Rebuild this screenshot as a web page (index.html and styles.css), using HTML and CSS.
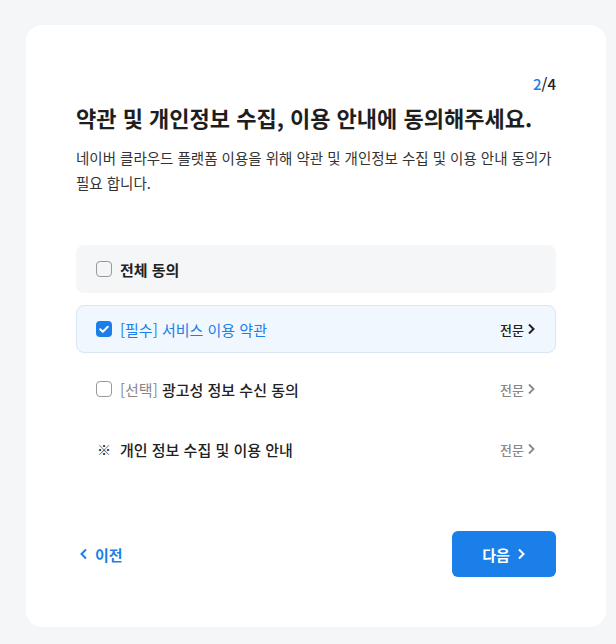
FILE: index.html
```html
<!DOCTYPE html>
<html lang="ko">
<head>
    <meta charset="UTF-8">
    <meta name="viewport" content="width=device-width, initial-scale=1.0">
    <title>약관 동의</title>
    <link rel="stylesheet" href="styles.css">
</head>
<body>
    <div class="card">
        <div class="step"><span class="step-now">2</span>/4</div>
        <h1 class="title">약관 및 개인정보 수집, 이용 안내에 동의해주세요.</h1>
        <p class="desc">네이버 클라우드 플랫폼 이용을 위해 약관 및 개인정보 수집 및 이용 안내 동의가 필요 합니다.</p>

        <ul class="terms">
            <li class="term term-all">
                <span class="check"></span>
                <span class="term-label">전체 동의</span>
            </li>
            <li class="term term-on">
                <span class="check checked">
                    <svg viewBox="0 0 16 16" width="16" height="16"><path d="M4.2 8.2l2.6 2.5 5-5" fill="none" stroke="#fff" stroke-width="2" stroke-linecap="round" stroke-linejoin="round"/></svg>
                </span>
                <span class="term-label">[필수] 서비스 이용 약관</span>
                <a class="more">전문 <svg viewBox="0 0 10 12" width="10" height="12"><path d="M3 1.5l4.5 4.5L3 10.5" fill="none" stroke="currentColor" stroke-width="2"/></svg></a>
            </li>
            <li class="term">
                <span class="check"></span>
                <span class="term-label"><span class="tag">[선택]</span> 광고성 정보 수신 동의</span>
                <a class="more">전문 <svg viewBox="0 0 10 12" width="10" height="12"><path d="M3 1.5l4.5 4.5L3 10.5" fill="none" stroke="currentColor" stroke-width="1.8"/></svg></a>
            </li>
            <li class="term">
                <span class="mark">※</span>
                <span class="term-label">개인 정보 수집 및 이용 안내</span>
                <a class="more">전문 <svg viewBox="0 0 10 12" width="10" height="12"><path d="M3 1.5l4.5 4.5L3 10.5" fill="none" stroke="currentColor" stroke-width="1.8"/></svg></a>
            </li>
        </ul>

        <div class="actions">
            <a class="prev"><svg viewBox="0 0 10 12" width="10" height="12"><path d="M7 1.5L2.5 6 7 10.5" fill="none" stroke="currentColor" stroke-width="2"/></svg> 이전</a>
            <button class="next">다음 <svg viewBox="0 0 10 12" width="10" height="12"><path d="M3 1.5l4.5 4.5L3 10.5" fill="none" stroke="currentColor" stroke-width="2"/></svg></button>
        </div>
    </div>
</body>
</html>
```

FILE: styles.css
```css
body {
    margin: 0;
    padding: 25px 10px 18px 26px;
    background-color: #f5f6f8;
    font-family: "Noto Sans CJK KR", "Noto Sans", sans-serif;
    color: #222;
}
.card {
    width: 480px;
    background-color: #fff;
    border-radius: 16px;
    padding: 49px 50px 50px;
}
.step {
    text-align: right;
    font-size: 15px;
    line-height: 20px;
    font-weight: 500;
    color: #222;
}
.step-now {
    color: #1a7fe8;
}
.title {
    margin: 7px 0 0;
    font-size: 22px;
    line-height: 32px;
    font-weight: 700;
    color: #1e1e1e;
}
.desc {
    margin: 12px 0 0;
    font-size: 14.5px;
    line-height: 25px;
    color: #333;
}
.terms {
    list-style: none;
    margin: 50px 0 0;
    padding: 0;
    display: flex;
    flex-direction: column;
    gap: 12px;
}
.term {
    display: flex;
    align-items: center;
    height: 48px;
    padding: 0 19px 0 19px;
    border: 1px solid transparent;
    border-radius: 8px;
    box-sizing: border-box;
    font-size: 15px;
    font-weight: 500;
    color: #222;
}
.term-all {
    background-color: #f5f6f8;
    border-color: #f5f6f8;
}
.term-all .term-label {
    font-weight: 700;
}
.term-on {
    background-color: #f0f7ff;
    border-color: #d8e6f5;
}
.term-on .term-label {
    color: #1a7fe8;
    font-weight: 400;
}
.check {
    width: 14px;
    height: 14px;
    border: 1px solid #999;
    border-radius: 4px;
    margin-right: 8px;
    display: flex;
    align-items: center;
    justify-content: center;
    flex-shrink: 0;
}
.check.checked {
    width: 16px;
    height: 16px;
    border: none;
    background-color: #1a7fe8;
}
.mark {
    width: 16px;
    margin-right: 8px;
    font-size: 14px;
    font-weight: 700;
    text-align: center;
    color: #222;
}
.tag {
    color: #888;
    font-weight: 400;
}
.more {
    margin-left: auto;
    display: flex;
    align-items: center;
    gap: 2px;
    font-size: 13px;
    font-weight: 500;
    color: #888;
    cursor: pointer;
}
.term-on .more {
    color: #222;
}
.actions {
    margin-top: 58px;
    display: flex;
    align-items: center;
    justify-content: space-between;
}
.prev {
    display: flex;
    align-items: center;
    gap: 6px;
    margin-left: 3px;
    font-size: 15px;
    font-weight: 700;
    color: #1a7fe8;
    cursor: pointer;
}
.next {
    width: 104px;
    height: 46px;
    border: none;
    border-radius: 6px;
    background-color: #1a7fe8;
    color: #fff;
    font-family: inherit;
    font-size: 15px;
    font-weight: 700;
    display: flex;
    align-items: center;
    justify-content: center;
    gap: 6px;
    cursor: pointer;
}
```
